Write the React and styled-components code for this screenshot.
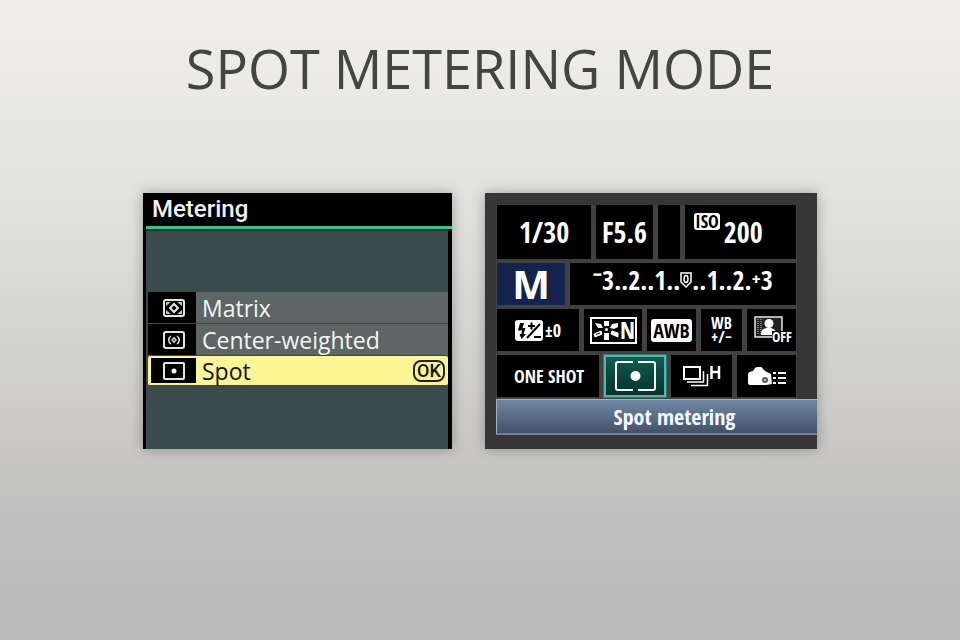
import React, {useState} from 'react';
import styled, {createGlobalStyle, css} from 'styled-components';

const GlobalStyle = createGlobalStyle`
  * {
    box-sizing: border-box;
  }

  body {
    margin: 0;
    font-family: "Open Sans", "Noto Sans", sans-serif;
  }

  button {
    margin: 0;
    padding: 0;
    border: 0;
    font: inherit;
    color: inherit;
    cursor: pointer;
  }

  svg {
    display: block;
    flex: none;
    overflow: visible;
  }
`

const narrow = css`
  font-family: "Open Sans Condensed", "Open Sans", sans-serif;
`

const Page = styled.main`
  min-height: 100vh;
  padding: 32px 143px;
  background: linear-gradient(
    #efeeea 0%, #ebeae6 13%, #e4e4e0 26%, #dddddb 38%, #d4d4d2 51%,
    #cfcecb 61%, #c8c7c5 70%, #bfbfbf 82%, #bbb 92%, #bababa 100%
  );
`

const Title = styled.h1`
  margin: 0 -100px 89px;
  color: #444;
  font-size: 54px;
  font-weight: 400;
  line-height: 72px;
  text-align: center;
`

const Screens = styled.div`
  display: grid;
  grid-template-columns: 309fr 332fr;
  gap: 33px;
`

const Screen = styled.section`
  display: flex;
  flex-direction: column;
  box-shadow: 0 0 12px rgba(0, 0, 0, 0.3);
`

const MenuScreen = styled(Screen)`
  padding-left: 3px;
  background: #000;
  color: #f2f2f2;
`

const MenuTitle = styled.h2`
  margin: 0;
  padding: 0 6px;
  color: #f0f0f0;
  font-family: Roboto, sans-serif;
  font-size: 24px;
  font-weight: 500;
  line-height: 33px;
`

const MenuBody = styled.div`
  flex: 1;
  border-top: 3px solid #35c48b;
  background: #000;
`

const MenuList = styled.div`
  display: flex;
  flex-direction: column;
  height: 100%;
  margin-right: 4px;
  padding: 61px 0 63px 2px;
  border-top: 2px solid #173a22;
  background: #3b4a4b;
`

const MenuItem = styled.button`
  display: flex;
  align-items: center;
  height: ${props => props.$selected ? 30 : 32}px;
  padding: ${props => props.$selected ? '2px 3px' : '0'};
  border-radius: ${props => props.$selected ? 2 : 0}px;
  border-bottom: 1px solid #4e4220;
  background: ${props => props.$selected ? '#fbf593' : '#5d6665'};
  color: ${props => props.$selected ? '#111' : '#f4f4f4'};
  text-align: left;
`

const MenuIcon = styled.span`
  display: flex;
  align-items: center;
  align-self: stretch;
  justify-content: flex-end;
  width: ${props => props.$selected ? 45 : 48}px;
  padding-right: 11px;
  background: #000;
`

const MenuLabel = styled.span`
  flex: 1;
  padding-left: 6px;
  font-size: 23px;
  font-weight: 500;
  line-height: 24px;
`

const OkBadge = styled.span`
  width: 32px;
  border: 2px solid #222;
  border-radius: 8px;
  font-family: Roboto, sans-serif;
  font-size: 18px;
  font-weight: 500;
  line-height: 18px;
  text-align: center;
`

const QuickScreen = styled(Screen)`
  padding: 12px 0 12px 11px;
  background: #363636;
  color: #fff;
`

const Panel = styled.div`
  display: flex;
  flex-direction: column;
  gap: 4px;
  margin-right: 20px;
  padding: 0 1px 2px;
  background: #414141;
`

const PanelRow = styled.div`
  display: grid;
  grid-template-columns: ${props => props.$columns};
  gap: 5px;
  height: ${props => props.$tall ? 54 : 42}px;
`

const Cell = styled.button`
  display: flex;
  align-items: center;
  justify-content: center;
  min-width: 0;
  background: #000;
  ${narrow}
  font-size: 28px;
  line-height: 32px;
`

const IsoCell = styled(Cell)`
  padding-right: 24px;
`

const ModeCell = styled(Cell)`
  background: #14234d;
  font-family: "Open Sans", sans-serif;
  font-size: 40px;
  font-weight: 700;
`

const SpotCell = styled(Cell)`
  border: 2px solid #58b5a6;
  background: linear-gradient(#0f5c53, #06332e);
  outline: 1px solid #2f7c71;
`

const SmallText = styled.span`
  padding-left: 2px;
  font-size: 18px;
`

const IsoBadge = styled.span`
  align-self: flex-start;
  margin: 8px 4px 0 0;
  padding: 0 1px;
  border-radius: 3px;
  background: #fff;
  color: #000;
  font-size: 18px;
  line-height: 17px;
`

const Scale = styled(Cell)`
  padding-bottom: 8px;
  font-size: 26px;
  font-weight: 700;
`

const AwbBadge = styled.span`
  padding: 0 2px;
  border-radius: 3px;
  background: #fff;
  color: #000;
  font-size: 20px;
  line-height: 23px;
`

const WbShift = styled.span`
  display: flex;
  flex-direction: column;
  align-items: center;
  font-size: 16px;
  line-height: 14px;
`

const Caption = styled.div`
  padding-left: 35px;
  border-top: 1px solid #a3b1c4;
  border-bottom: 2px solid #77808e;
  border-left: 1px solid #a3b1c4;
  background: linear-gradient(#7088a5, #435068);
  color: #f4f8ff;
  ${narrow}
  font-size: 22px;
  line-height: 33px;
  text-align: center;
`

const MatrixIcon = () => (
  <svg width="22" height="18" viewBox="0 0 22 18" fill="none" stroke="#e4e4e4">
    <rect x="1" y="1" width="20" height="16" rx="2" strokeWidth="2"/>
    <path d="M7 9 11 5 15 9 11 13Z" strokeWidth="2"/>
    <path d="M3 3H8L3 7ZM19 3H14L19 7ZM3 15H8L3 11ZM19 15H14L19 11Z" fill="#bdbdbd" stroke="none"/>
  </svg>
)

const CenterIcon = () => (
  <svg width="22" height="18" viewBox="0 0 22 18" fill="none" stroke="#e4e4e4">
    <rect x="1" y="1" width="20" height="16" rx="2" strokeWidth="2"/>
    <path d="M8 5C5 7 5 11 8 13M14 5C17 7 17 11 14 13" strokeWidth="1.500"/>
    <path d="M8 9 11 5.500 14 9 11 12.500Z" fill="#c8c8c8" stroke="none"/>
    <circle cx="11" cy="9" r="1" fill="#555" stroke="none"/>
  </svg>
)

const SpotIcon = () => (
  <svg width="22" height="18" viewBox="0 0 22 18" fill="none" stroke="#e4e4e4">
    <rect x="1" y="1" width="20" height="16" rx="1" strokeWidth="2"/>
    <circle cx="11" cy="9" r="2.500" fill="#fff" stroke="none"/>
  </svg>
)

const ZeroMark = () => (
  <svg width="12" height="17" viewBox="0 0 12 17">
    <path d="M1 1H11V10L6 15 1 10Z" fill="none" stroke="#fff" strokeWidth="1.500"/>
    <ellipse cx="6" cy="7" rx="2" ry="3.500" fill="none" stroke="#fff" strokeWidth="1.500"/>
  </svg>
)

const FlashIcon = () => (
  <svg width="28" height="21" viewBox="0 0 28 21">
    <rect width="28" height="21" rx="3" fill="#fff"/>
    <path d="M5 3H9L7.500 8H10.500L8.500 14H11L6.500 19 4.500 14H6.500L7 10.500H3Z" fill="#000"/>
    <path d="M12 18 25 4M13 6H20M16.500 2.500V9.500M19 17H26" stroke="#000" strokeWidth="2"/>
  </svg>
)

const PictureStyleIcon = () => (
  <svg width="47" height="27" viewBox="0 0 47 27">
    <rect x="1" y="1" width="45" height="25" fill="#000" stroke="#fff" strokeWidth="2"/>
    <path d="M14 4H19V9H14ZM14 16H19V23H14Z" fill="#fff"/>
    <path d="M5 6 11 7 13 11 8 11ZM28 6 22 7 20 11 24 12 28 10Z" fill="#fff"/>
    <path d="M4 17 11 14 12 17 5 20ZM22 14 28 16 28 20 21 17Z" fill="#fff" stroke="#fff"/>
    <path d="M6 17.500 10 16" stroke="#000"/>
    <circle cx="16.500" cy="12.500" r="1.500" fill="#fff"/>
    <text x="30" y="22" fill="#fff" fontSize="24"
          fontFamily="Open Sans Condensed, Open Sans, sans-serif">N</text>
  </svg>
)

const LightingIcon = () => (
  <svg width="36" height="28" viewBox="0 0 36 28">
    <path d="M1 1H28V21H1Z" fill="#222" stroke="#e8e8e8" strokeWidth="1.500"/>
    <path d="M4 3V19M7 3V19" stroke="#777" strokeDasharray="1 1" strokeWidth="2"/>
    <circle cx="15" cy="7.500" r="4.500" fill="#fff"/>
    <path d="M7 19C7 13 10 12 15 12S22 14 22 19Z" fill="#fff"/>
    <path d="M18 15H36V28H18Z" fill="#000"/>
    <text x="18" y="26" fill="#fff" fontSize="14"
          fontFamily="Open Sans Condensed, Open Sans, sans-serif">OFF</text>
  </svg>
)

const SpotMeterIcon = () => (
  <svg width="41" height="32" viewBox="0 0 41 32" fill="none" stroke="#fff" strokeWidth="2">
    <path d="M18 2H3Q1 2 1 4V28Q1 30 3 30H18M23 2H38Q40 2 40 4V28Q40 30 38 30H23"/>
    <circle cx="20.500" cy="16" r="5" fill="#fff" stroke="none"/>
  </svg>
)

const DriveIcon = () => (
  <svg width="38" height="22" viewBox="0 0 38 22" fill="none" stroke="#fff">
    <path d="M1 2H17V14H1Z" strokeWidth="2"/>
    <path d="M4 17H20.500V6M8 20.500H24.500V9" strokeWidth="1.500"/>
    <path d="M28.500 1V14M36 1V14M28 7H36" strokeWidth="2.500"/>
  </svg>
)

const CameraListIcon = () => (
  <svg width="38" height="19" viewBox="0 0 38 19">
    <path d="M0 7Q0 5 5 4L7 1Q8 0 9 0H13Q14 0 15 2L17 4 23 7 24 17 18 18H2Q0 18 0 16Z" fill="#fff"/>
    <circle cx="17" cy="13" r="3" fill="#555"/>
    <circle cx="17" cy="13" r="1" fill="#ddd"/>
    <path d="M25 6H28M30 6H38M25 11H28M30 11H38M25 16H28M30 16H38" stroke="#fff" strokeWidth="2"/>
  </svg>
)

const modes = [
  {id: 'matrix', label: 'Matrix', Icon: MatrixIcon},
  {id: 'center', label: 'Center-weighted', Icon: CenterIcon},
  {id: 'spot', label: 'Spot', Icon: SpotIcon},
]

const App = () => {
  const [mode, setMode] = useState('spot')

  return (
    <Page>
      <GlobalStyle/>
      <Title>SPOT METERING MODE</Title>
      <Screens>
        <MenuScreen>
          <MenuTitle>Metering</MenuTitle>
          <MenuBody>
            <MenuList>
              {modes.map(({id, label, Icon}) => (
                <MenuItem key={id} $selected={mode === id} onClick={() => setMode(id)}>
                  <MenuIcon $selected={mode === id}><Icon/></MenuIcon>
                  <MenuLabel>{label}</MenuLabel>
                  {mode === id && <OkBadge>OK</OkBadge>}
                </MenuItem>
              ))}
            </MenuList>
          </MenuBody>
        </MenuScreen>

        <QuickScreen>
          <Panel>
            <PanelRow $tall $columns="94fr 57fr 22fr 111fr">
              <Cell>1/30</Cell>
              <Cell>F5.6</Cell>
              <Cell aria-label="Empty"/>
              <IsoCell><IsoBadge>ISO</IsoBadge>200</IsoCell>
            </PanelRow>
            <PanelRow $columns="68fr 226fr">
              <ModeCell>M</ModeCell>
              <Scale>⁻3..2..1..<ZeroMark/>..1..2.⁺3</Scale>
            </PanelRow>
            <PanelRow $columns="82fr 58fr 49fr 41fr 49fr">
              <Cell><FlashIcon/><SmallText>±0</SmallText></Cell>
              <Cell aria-label="Picture style"><PictureStyleIcon/></Cell>
              <Cell><AwbBadge>AWB</AwbBadge></Cell>
              <Cell><WbShift><span>WB</span><span>+/−</span></WbShift></Cell>
              <Cell aria-label="Lighting optimizer"><LightingIcon/></Cell>
            </PanelRow>
            <PanelRow $columns="102fr 62fr 61fr 59fr">
              <Cell><SmallText>ONE SHOT</SmallText></Cell>
              <SpotCell aria-label="Spot metering"><SpotMeterIcon/></SpotCell>
              <Cell aria-label="Drive mode"><DriveIcon/></Cell>
              <Cell aria-label="Custom controls"><CameraListIcon/></Cell>
            </PanelRow>
          </Panel>
          <Caption>Spot metering</Caption>
        </QuickScreen>
      </Screens>
    </Page>
  );
};

export default App;
